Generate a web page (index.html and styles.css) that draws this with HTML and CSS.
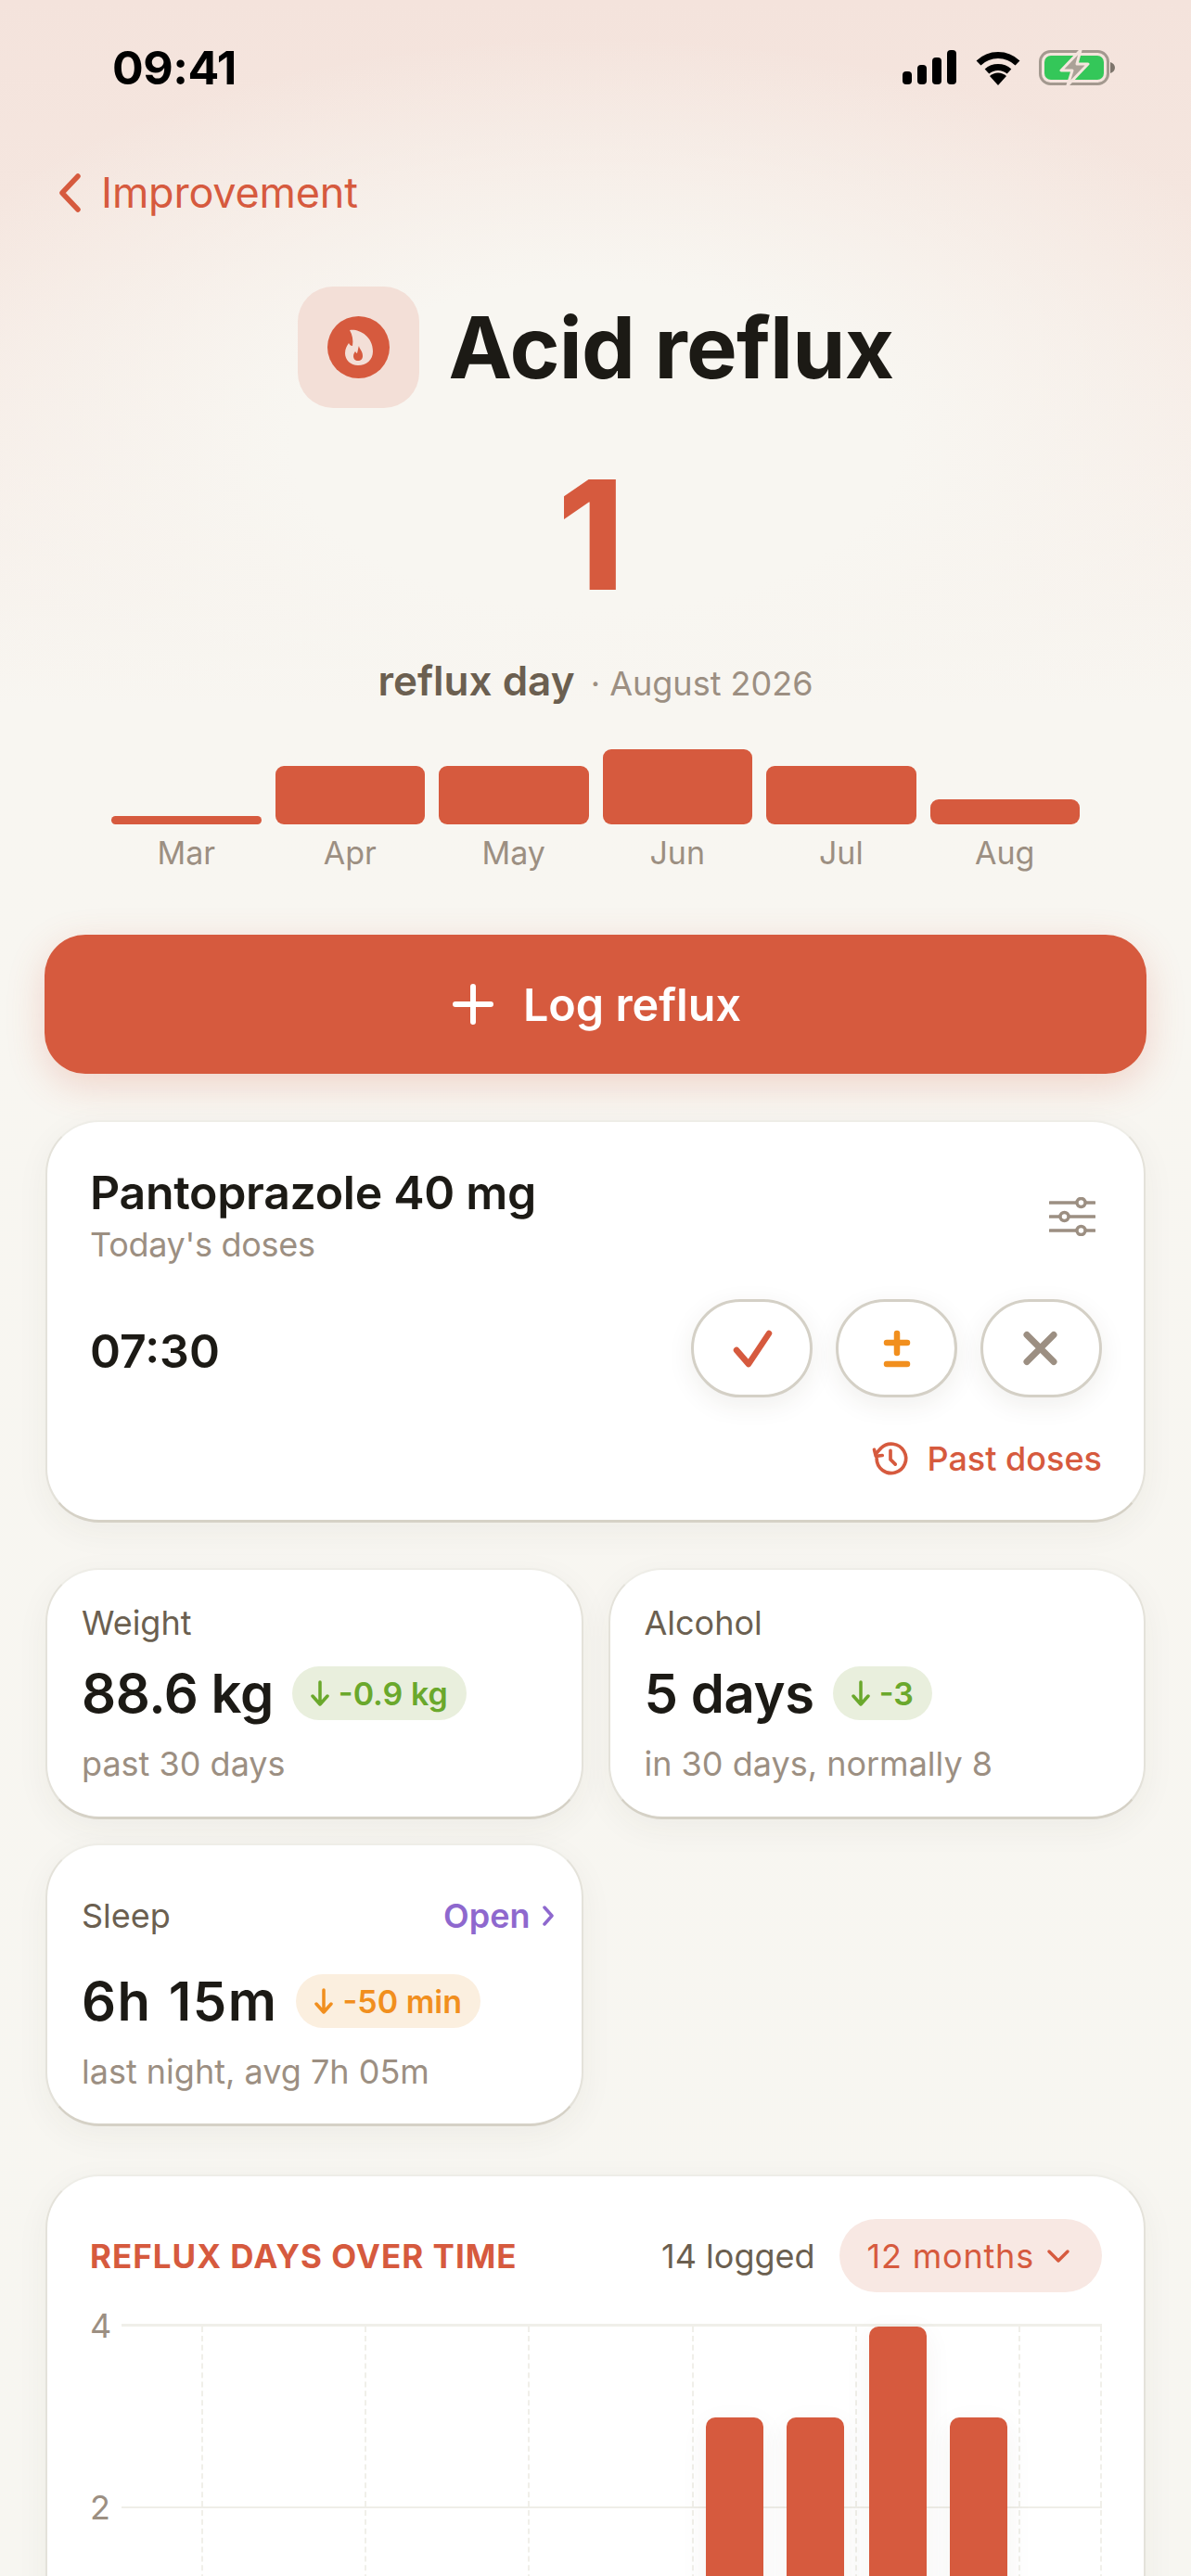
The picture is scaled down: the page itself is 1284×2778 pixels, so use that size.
FILE: index.html
```html
<!DOCTYPE html>
<html lang="en">
<head>
    <meta charset="UTF-8">
    <meta name="viewport" content="width=device-width, initial-scale=1.0">
    <title>Acid reflux</title>
    <link rel="stylesheet" href="styles.css">
</head>
<body>
    <!-- Status bar -->
    <div class="status">
        <span class="status-time">09:41</span>
        <div class="status-icons">
            <svg width="58" height="38" viewBox="0 0 58 38">
                <rect x="0" y="23" width="10" height="14" rx="4" />
                <rect x="16" y="16" width="10" height="21" rx="4" />
                <rect x="32" y="8" width="10" height="29" rx="4" />
                <rect x="48" y="0" width="10" height="37" rx="4" />
            </svg>
            <svg class="wifi" width="50" height="38" viewBox="0 0 50 38">
                <path d="M4 14 A30 30 0 0 1 46 14" fill="none" stroke="#000" stroke-width="7" />
                <path d="M13 23 A18 18 0 0 1 37 23" fill="none" stroke="#000" stroke-width="7" />
                <path d="M16 28 A13 13 0 0 1 34 28 L25 38 Z" />
            </svg>
            <svg class="battery" width="82" height="40" viewBox="0 0 82 40">
                <rect x="1.5" y="2.5" width="73" height="35" rx="11" fill="none" stroke="#a3998f" stroke-width="3" />
                <rect x="6" y="7" width="64" height="26" rx="7" fill="#34c759" />
                <path d="M77 14 C80 15 82 17 82 20 C82 23 80 25 77 26 Z" fill="#7d756c" />
                <path d="M45 1 L24 23 L36 23 L31 39 L53 16 L41 16 Z" fill="#aaa197" stroke="#f4e5de" stroke-width="3" stroke-linejoin="round" />
            </svg>
        </div>
    </div>

    <a class="back-link" href="#">
        <svg width="26" height="42" viewBox="0 0 26 42">
            <path d="M22 3 L5 21 L22 39" fill="none" stroke="#d65a3e" stroke-width="5.5" stroke-linecap="round" stroke-linejoin="round" />
        </svg>
        Improvement
    </a>

    <!-- Headline -->
    <header class="title-row">
        <div class="title-icon">
            <svg width="67" height="67" viewBox="0 0 67 67">
                <circle cx="33.5" cy="33.5" r="33.5" fill="#d65a3e" />
                <path d="M24 15 C32 13 49 20 49 38 C49 47 42 53 33 53 C25 53 19 47 19 40 C19 35 21 32 23 29 C24 31 25 32 27 32 C28 26 27 20 24 15 Z" fill="#f3dfd7" />
                <path d="M34 32 C34 35 38 37 38 43 C38 46 36 48 33 48 C30 48 28 46 28 43 C28 41 29 39 30 38 C31 39 31 40 32 40 C33 37 33 34 34 32 Z" fill="#d65a3e" />
            </svg>
        </div>
        <h1>Acid reflux</h1>
    </header>

    <div class="big-number">1</div>
    <p class="big-caption"><strong>reflux day</strong> <span>· August 2026</span></p>

    <main class="content">
        <div class="mini-chart">
            <div class="mini-col"><div class="mini-bar" style="height: 9px"></div><span>Mar</span></div>
            <div class="mini-col"><div class="mini-bar" style="height: 63px"></div><span>Apr</span></div>
            <div class="mini-col"><div class="mini-bar" style="height: 63px"></div><span>May</span></div>
            <div class="mini-col"><div class="mini-bar" style="height: 81px"></div><span>Jun</span></div>
            <div class="mini-col"><div class="mini-bar" style="height: 63px"></div><span>Jul</span></div>
            <div class="mini-col"><div class="mini-bar" style="height: 27px"></div><span>Aug</span></div>
        </div>

        <button class="log-btn">
            <svg width="44" height="44" viewBox="0 0 44 44">
                <path d="M22 3 V41 M3 22 H41" fill="none" stroke="#fff" stroke-width="6" stroke-linecap="round" />
            </svg>
            Log reflux
        </button>

        <!-- Medication -->
        <section class="card dose-card">
            <div class="dose-head">
                <div>
                    <h2>Pantoprazole 40 mg</h2>
                    <p class="dose-sub">Today's doses</p>
                </div>
                <svg class="sliders" width="50" height="42" viewBox="0 0 50 42" fill="none" stroke="#9c8f82" stroke-width="3.5" stroke-linecap="round">
                    <path d="M1 6 H29 M40 6 H49 M1 21 H11 M22 21 H49 M1 36 H29 M40 36 H49" />
                    <circle cx="34.5" cy="6" r="4.5" />
                    <circle cx="16.5" cy="21" r="4.5" />
                    <circle cx="34.5" cy="36" r="4.5" />
                </svg>
            </div>
            <div class="dose-row">
                <span class="dose-time">07:30</span>
                <div class="dose-actions">
                    <button class="round-btn">
                        <svg width="44" height="44" viewBox="0 0 44 44"><path d="M5 24 L18 39 L40 6" fill="none" stroke="#d65a3e" stroke-width="6.5" stroke-linecap="round" stroke-linejoin="round" /></svg>
                    </button>
                    <button class="round-btn">
                        <svg width="44" height="44" viewBox="0 0 44 44"><path d="M11 16 H33 M22 6 V27 M11 39 H33" fill="none" stroke="#f18f1e" stroke-width="6.5" stroke-linecap="round" /></svg>
                    </button>
                    <button class="round-btn">
                        <svg width="44" height="44" viewBox="0 0 44 44"><path d="M6 7.5 L35 36.5 M35 7.5 L6 36.5" fill="none" stroke="#9c8f82" stroke-width="7" stroke-linecap="round" /></svg>
                    </button>
                </div>
            </div>
            <a class="past-link" href="#">
                <svg width="44" height="42" viewBox="0 0 24 24" fill="none" stroke="#d65a3e" stroke-width="2.1" stroke-linecap="round" stroke-linejoin="round">
                    <path d="M3.5 12a9 9 0 1 0 2.6-6.4L3 9" />
                    <path d="M2 6.5 L3 10.5 L7 10" />
                    <path d="M12 7v5.5l3 3" />
                </svg>
                Past doses
            </a>
        </section>

        <!-- Stats -->
        <section class="stats">
            <div class="card stat">
                <div class="stat-label">Weight</div>
                <div class="stat-value">88.6 kg <span class="badge badge-green"><svg width="20" height="28" viewBox="0 0 20 28"><path d="M10 2 V26 M2 17 L10 26 L18 17" /></svg>-0.9 kg</span></div>
                <div class="stat-sub">past 30 days</div>
            </div>
            <div class="card stat">
                <div class="stat-label">Alcohol</div>
                <div class="stat-value">5 days <span class="badge badge-green"><svg width="20" height="28" viewBox="0 0 20 28"><path d="M10 2 V26 M2 17 L10 26 L18 17" /></svg>-3</span></div>
                <div class="stat-sub">in 30 days, normally 8</div>
            </div>
            <div class="card stat stat-sleep">
                <div class="stat-label stat-label-row">Sleep <a class="open-link" href="#">Open <svg width="12" height="24" viewBox="0 0 12 24"><path d="M2 3 L10 12 L2 21" /></svg></a></div>
                <div class="stat-value">6h 15m <span class="badge badge-orange"><svg width="20" height="28" viewBox="0 0 20 28"><path d="M10 2 V26 M2 17 L10 26 L18 17" /></svg>-50 min</span></div>
                <div class="stat-sub">last night, avg 7h 05m</div>
            </div>
        </section>

        <!-- Chart -->
        <section class="card chart-card">
            <div class="chart-head">
                <h3>REFLUX DAYS OVER TIME</h3>
                <div class="chart-tools">
                    <span class="chart-count">14 logged</span>
                    <button class="range-pill">12 months
                        <svg width="26" height="16" viewBox="0 0 26 16"><path d="M3 3 L13 13 L23 3" fill="none" stroke="#d65a3e" stroke-width="3.5" stroke-linecap="round" stroke-linejoin="round" /></svg>
                    </button>
                </div>
            </div>
            <div class="chart-body">
                <div class="y-axis">
                    <span>4</span>
                    <span>2</span>
                </div>
                <div class="plot">
                    <div class="slot"></div><div class="slot"></div><div class="slot"></div><div class="slot"></div>
                    <div class="slot"></div><div class="slot"></div><div class="slot"></div>
                    <div class="slot"><div class="bar" style="height: 294px"></div></div>
                    <div class="slot"><div class="bar" style="height: 294px"></div></div>
                    <div class="slot"><div class="bar" style="height: 392px"></div></div>
                    <div class="slot"><div class="bar" style="height: 294px"></div></div>
                    <div class="slot"></div>
                </div>
            </div>
        </section>
    </main>
</body>
</html>
```

FILE: styles.css
```css
/* General styling */
* {
    box-sizing: border-box;
}

html, body {
    height: 2778px;
    overflow: hidden;
}

body {
    margin: 0;
    font-family: Inter, "Noto Sans", sans-serif;
    color: #1c1a15;
    background:
        radial-gradient(ellipse 820px 440px at 50% 480px, #f8f6f1 0%, #f8f6f1 40%, rgba(248, 246, 241, 0) 100%),
        linear-gradient(#f4e3dc 0, #f5e7e0 280px, #f6ece6 480px, #f8f6f1 760px, #f7f6f1 100%);
}

h1, h2, h3, p {
    margin: 0;
}

/* Status bar */
.status {
    height: 98px;
    padding: 48px 82px 0 121px;
    display: flex;
    justify-content: space-between;
    align-items: center;
}

.status-time {
    font-size: 50px;
    font-weight: 700;
    line-height: 50px;
    letter-spacing: -0.5px;
    color: #000;
}

.status-icons {
    display: flex;
    align-items: center;
    gap: 20px;
}

.battery {
    margin-left: -1px;
}

/* Back link */
.back-link {
    margin: 87px 0 0 62px;
    height: 46px;
    display: flex;
    align-items: center;
    gap: 21px;
    font-size: 45px;
    line-height: 46px;
    letter-spacing: -0.2px;
    color: #d65a3e;
    text-decoration: none;
}

/* Headline */
.title-row {
    margin-top: 78px;
    display: flex;
    justify-content: center;
    align-items: center;
    gap: 32px;
}

.title-icon {
    width: 131px;
    height: 131px;
    border-radius: 38px;
    background-color: #f3dfd7;
    display: flex;
    align-items: center;
    justify-content: center;
}

.title-row h1 {
    font-size: 92px;
    font-weight: 700;
    line-height: 100px;
    letter-spacing: -0.7px;
}

.big-number {
    margin-top: 55px;
    padding-right: 10px;
    font-size: 164px;
    font-weight: 800;
    line-height: 164px;
    text-align: center;
    color: #d65a3e;
}

.big-caption {
    margin-top: 53px;
    line-height: 44px;
    text-align: center;
    color: #9c8f82;
    font-size: 36px;
}

.big-caption strong {
    font-size: 44px;
    font-weight: 600;
    color: #6b5f50;
    margin-right: 7px;
}

/* Main column */
.content {
    padding: 0 49px;
}

.mini-chart {
    margin-top: 49px;
    padding: 0 71px;
    height: 130px;
    display: flex;
    align-items: flex-end;
    gap: 15px;
}

.mini-col {
    flex: 1;
    text-align: center;
    font-size: 34px;
    line-height: 36px;
    color: #9c8f82;
}

.mini-bar {
    background-color: #d65a3e;
    border-radius: 9px;
    margin-bottom: 13px;
}

.log-btn {
    display: flex;
    align-items: center;
    justify-content: center;
    gap: 32px;
    width: 1188px;
    height: 150px;
    margin: 70px -1px 0;
    padding: 0 0 0 3px;
    border: none;
    border-radius: 44px;
    background-color: #d65a3e;
    box-shadow: 0 12px 40px rgba(214, 90, 62, 0.22);
    color: #fff;
    font-family: inherit;
    font-size: 48.5px;
    font-weight: 600;
}

.card {
    background-color: #fff;
    border: 2px solid #e4e2da;
    border-top-color: #eeede7;
    border-bottom: 3px solid #d5d1c6;
    border-radius: 58px;
    box-shadow: 0 10px 36px rgba(60, 50, 30, 0.05);
}

/* Dose card */
.dose-card {
    margin-top: 50px;
    padding: 51px 45px 45px 46px;
}

.dose-head {
    display: flex;
    justify-content: space-between;
    align-items: center;
}

.dose-head h2 {
    font-size: 50px;
    font-weight: 600;
    line-height: 50px;
    letter-spacing: -0.3px;
}

.dose-sub {
    margin-top: 11px;
    font-size: 36px;
    line-height: 40px;
    letter-spacing: -0.3px;
    color: #9c8f82;
}

.sliders {
    margin-right: 7px;
}

.dose-row {
    margin-top: 39px;
    display: flex;
    justify-content: space-between;
    align-items: center;
}

.dose-time {
    padding-top: 6px;
    font-size: 50px;
    font-weight: 600;
}

.dose-actions {
    display: flex;
    gap: 25px;
}

.round-btn {
    width: 131px;
    height: 106px;
    padding: 0;
    border: 3px solid #d4d0c6;
    border-radius: 53px;
    background-color: #fff;
    box-shadow: 0 8px 28px rgba(60, 50, 30, 0.08);
    display: flex;
    align-items: center;
    justify-content: center;
}

.past-link {
    margin-top: 45px;
    display: flex;
    justify-content: flex-end;
    align-items: center;
    gap: 17px;
    font-size: 36px;
    font-weight: 500;
    line-height: 40px;
    color: #d65a3e;
    text-decoration: none;
}

/* Stat cards */
.stats {
    margin-top: 49px;
    display: grid;
    grid-template-columns: 1fr 1fr;
    column-gap: 27px;
    row-gap: 26px;
}

.stat {
    padding: 37px 37px 37px;
}

.stat-sleep {
    padding: 56px 37px 36px;
}

.stat-label {
    font-size: 36px;
    line-height: 40px;
    color: #6b5f50;
}

.stat-label-row {
    display: flex;
    justify-content: space-between;
    margin-bottom: 43px;
}

.open-link {
    display: flex;
    align-items: center;
    gap: 13px;
    margin-right: -7px;
    font-weight: 600;
    color: #8e68ce;
    text-decoration: none;
}

.open-link svg {
    fill: none;
    stroke: #8e68ce;
    stroke-width: 3.5;
    stroke-linecap: round;
    stroke-linejoin: round;
}

.stat-value {
    margin-top: 27px;
    display: flex;
    align-items: center;
    gap: 20px;
    height: 58px;
    font-size: 58px;
    font-weight: 600;
    letter-spacing: -0.4px;
}

.stat-sleep .stat-value {
    margin-top: 0;
    letter-spacing: 1.5px;
    word-spacing: 2px;
}

.badge {
    height: 58px;
    padding: 0 20px;
    border-radius: 29px;
    display: flex;
    align-items: center;
    gap: 10px;
    font-size: 34px;
    font-weight: 600;
    letter-spacing: 0;
    word-spacing: 0;
}

.stat-sleep .badge {
    letter-spacing: 0;
    word-spacing: 0;
}

.badge svg {
    fill: none;
    stroke-width: 3.5;
    stroke-linecap: round;
    stroke-linejoin: round;
    stroke: currentColor;
}

.badge-green {
    background-color: #e9efdd;
    color: #6aa82c;
}

.badge-orange {
    background-color: #fbefdf;
    color: #f18f1e;
}

.stat-sub {
    margin-top: 27px;
    font-size: 36px;
    line-height: 40px;
    color: #9c8f82;
}

/* Chart card */
.chart-card {
    margin-top: 52px;
    padding: 46px 45px 40px 46px;
    border-bottom: none;
}

.chart-head {
    display: flex;
    justify-content: space-between;
    align-items: center;
}

.chart-head h3 {
    font-size: 35px;
    font-weight: 700;
    letter-spacing: 1px;
    color: #d65a3e;
}

.chart-tools {
    display: flex;
    align-items: center;
    gap: 26px;
}

.chart-count {
    font-size: 36px;
    color: #6b5f50;
}

.range-pill {
    height: 79px;
    padding: 0 34px 0 30px;
    border: none;
    border-radius: 40px;
    background-color: #f8e8e3;
    color: #d65a3e;
    font-family: inherit;
    font-size: 36px;
    letter-spacing: 0.8px;
    display: flex;
    align-items: center;
    gap: 13px;
}

.chart-body {
    margin-top: 16px;
    display: flex;
}

.y-axis {
    width: 34px;
    display: flex;
    flex-direction: column;
    gap: 156px;
    font-size: 36px;
    line-height: 40px;
    color: #9c8f82;
}

.plot {
    flex: 1;
    height: 392px;
    margin-top: 18px;
    display: grid;
    grid-template-columns: repeat(12, 1fr);
    border-top: 3px solid #f0efe9;
    background: linear-gradient(#efeee8, #efeee8) 0 194px / 100% 2px no-repeat;
}

.slot {
    display: flex;
    flex-direction: column;
    justify-content: flex-end;
    align-items: center;
}

.slot:nth-child(odd), .slot:last-child {
    border-right: 2px dashed #f0efe9;
}

.bar {
    width: 62px;
    background-color: #d65a3e;
    border-radius: 10px 10px 0 0;
    box-shadow: 0 8px 30px rgba(60, 50, 30, 0.06);
}
```
